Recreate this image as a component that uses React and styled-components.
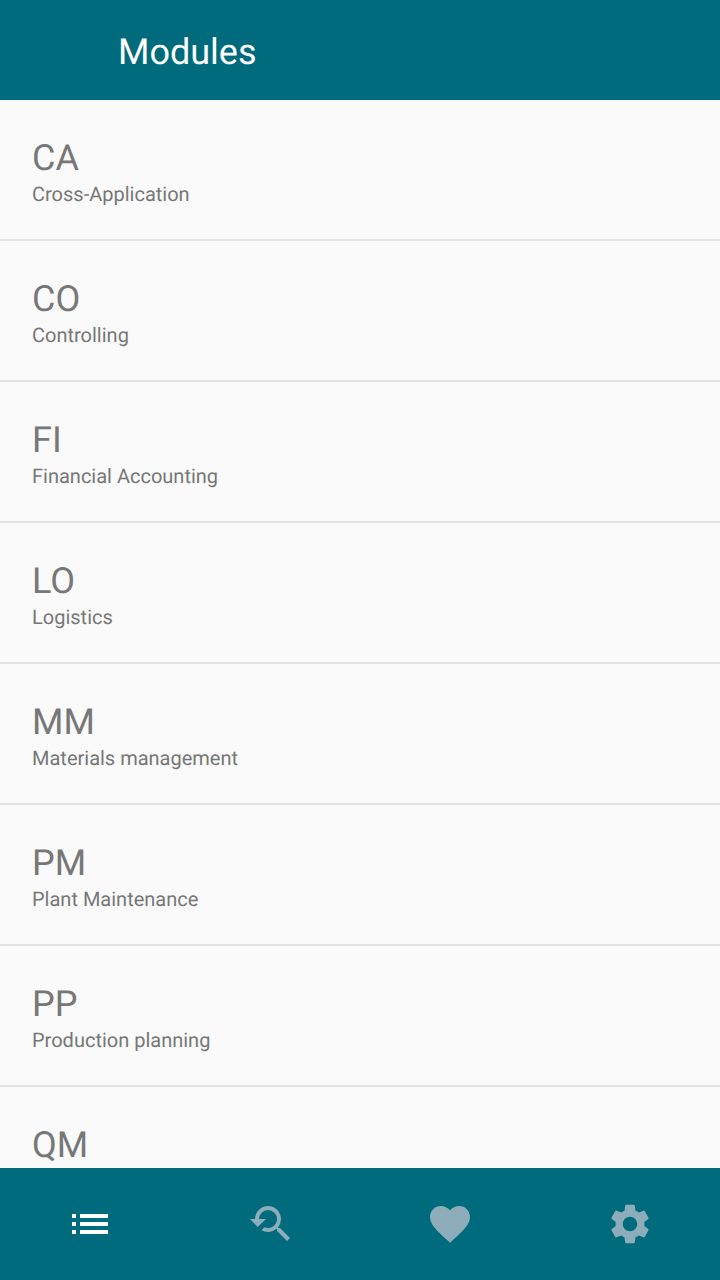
import React from "react";
import styled, { createGlobalStyle } from "styled-components";
import { MdList, MdYoutubeSearchedFor, MdFavorite, MdSettings } from "react-icons/md";

const GlobalStyle = createGlobalStyle`
  html, body {
    margin: 0;
    padding: 0;
    height: 100%;
    overflow: hidden;
    background: #fafafa;
    font-family: Roboto, "Liberation Sans", sans-serif;
    text-rendering: geometricPrecision;
  }
`;

const Page = styled.div`
  display: flex;
  flex-direction: column;
  height: 1280px;
`;

const Header = styled.header`
  box-sizing: border-box;
  flex: 0 0 100px;
  display: flex;
  align-items: center;
  padding: 4px 0 0 118px;
  background: #006b7c;
  color: #fff;
  font-size: 36px;
`;

const List = styled.ul`
  flex: 1;
  min-height: 0;
  margin: 0;
  padding: 0;
  list-style: none;
  overflow: hidden;
`;

const Row = styled.li`
  box-sizing: border-box;
  height: 141px;
  padding: 37px 32px 0;
  border-bottom: 2px solid #e2e2e2;
`;

const Code = styled.div`
  font-size: 36px;
  line-height: 42px;
  color: #777;
`;

const Name = styled.div`
  font-size: 20px;
  line-height: 30px;
  color: #777;
`;

const Nav = styled.nav`
  flex: 0 0 112px;
  display: grid;
  grid-template-columns: repeat(4, 1fr);
  background: #006b7c;
`;

const NavItem = styled.div`
  display: flex;
  align-items: center;
  justify-content: center;
  color: ${(p) => (p.$active ? "#fff" : "#8cadb9")};
`;

// the last row's name sits behind the nav bar in the reference, so it is left out
const modules = [
  ["CA", "Cross-Application"],
  ["CO", "Controlling"],
  ["FI", "Financial Accounting"],
  ["LO", "Logistics"],
  ["MM", "Materials management"],
  ["PM", "Plant Maintenance"],
  ["PP", "Production planning"],
  ["QM"],
];

export default function App() {
  return (
    <Page>
      <GlobalStyle />
      <Header>Modules</Header>
      <List>
        {modules.map(([code, name]) => (
          <Row key={code}>
            <Code>{code}</Code>
            {name && <Name>{name}</Name>}
          </Row>
        ))}
      </List>
      <Nav>
        <NavItem $active>
          <MdList size={48} />
        </NavItem>
        <NavItem>
          <MdYoutubeSearchedFor size={48} />
        </NavItem>
        <NavItem>
          <MdFavorite size={48} />
        </NavItem>
        <NavItem>
          <MdSettings size={48} />
        </NavItem>
      </Nav>
    </Page>
  );
}
